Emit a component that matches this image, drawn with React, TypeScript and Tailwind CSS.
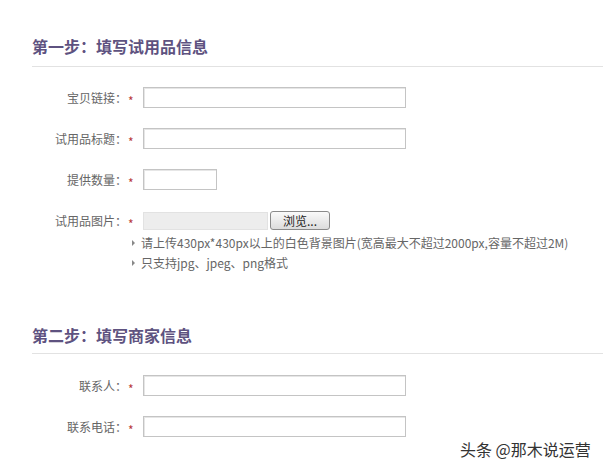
import React from "react";

const font = "font-['Noto_Sans_CJK_SC','Noto_Sans',sans-serif]";

function Row({ label, children }: { label: string; children: React.ReactNode }) {
  return (
    <div className="flex items-center h-[21px]">
      <div className="w-[95px] text-right text-[12px] leading-[21px] text-[#666] whitespace-nowrap">{label}</div>
      <div className="w-[16px] pl-[1px] text-[12px] leading-[21px] text-[#b83a3a] relative top-[3px]">*</div>
      {children}
    </div>
  );
}

function TextBox({ w }: { w: string }) {
  return <div className={`${w} h-[21px] border border-[#c4c4c4] bg-white shadow-[inset_1px_1px_0_#e6e6e6]`} />;
}

function Hint({ children }: { children: React.ReactNode }) {
  return (
    <div className="flex items-center h-[20px]">
      <span className="w-[9px] ml-[100px] flex items-center">
        <span className="block w-0 h-0 border-y-[3px] border-y-transparent border-l-[3px] border-l-[#888]" />
      </span>
      <span className="text-[12px] leading-[20px] text-[#666] whitespace-nowrap">{children}</span>
    </div>
  );
}

export default function App() {
  return (
    <div className={`relative w-[603px] h-[472px] bg-white overflow-hidden ${font}`}>
      <section className="pl-[32px] pt-[34px]">
        <h2 className="text-[16px] leading-[24px] font-bold text-[#5e5280] border-b border-[#e2e2e2] pb-[8px]">
          第一步：填写试用品信息
        </h2>
        <div className="flex flex-col gap-[20px] mt-[20px]">
          <Row label="宝贝链接：">
            <TextBox w="w-[263px]" />
          </Row>
          <Row label="试用品标题：">
            <TextBox w="w-[263px]" />
          </Row>
          <Row label="提供数量：">
            <TextBox w="w-[74px]" />
          </Row>
          <Row label="试用品图片：">
            <div className="flex items-center gap-[2px]">
              <div className="w-[125px] h-[18px] bg-[#ededed] border border-[#e2e2e2]" />
              <div className="w-[60px] h-[19px] rounded-[3px] border border-[#8a8a8a] bg-gradient-to-b from-[#fafafa] to-[#dcdcdc] text-[12px] leading-[17px] text-[#222] text-center">
                浏览...
              </div>
            </div>
          </Row>
        </div>
        <div className="mt-[2px] flex flex-col">
          <Hint>请上传430px*430px以上的白色背景图片(宽高最大不超过2000px,容量不超过2M)</Hint>
          <Hint>只支持jpg、jpeg、png格式</Hint>
        </div>
      </section>

      <section className="pl-[32px] mt-[50px]">
        <h2 className="text-[16px] leading-[24px] font-bold text-[#5e5280] border-b border-[#e2e2e2] pb-[6px]">
          第二步：填写商家信息
        </h2>
        <div className="flex flex-col gap-[20px] mt-[21px]">
          <Row label="联系人：">
            <TextBox w="w-[263px]" />
          </Row>
          <Row label="联系电话：">
            <TextBox w="w-[263px]" />
          </Row>
        </div>
      </section>

      <div className="absolute left-[460px] top-[439px] text-[16px] leading-[20px] text-[#333] whitespace-nowrap [text-shadow:0_0_2px_#fff,0_0_2px_#fff]">
        头条 @那木说运营
      </div>
    </div>
  );
}
